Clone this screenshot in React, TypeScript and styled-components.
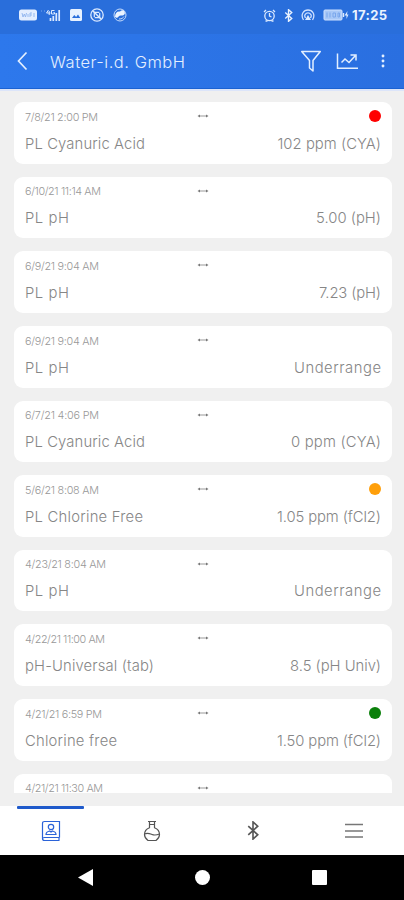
import React, { useLayoutEffect, useRef, useState } from "react";
import styled, { createGlobalStyle } from "styled-components";

const Global = createGlobalStyle`
  * { box-sizing: border-box; }
  body { margin: 0; background: #f0f0f0; }
`;

const Screen = styled.div`
  width: 404px;
  height: 900px;
  display: flex;
  flex-direction: column;
  overflow: hidden;
  background: #f0f0f0;
  font-family: Inter, "Open Sans", sans-serif;
`;

const StatusBar = styled.div`
  height: 34px;
  flex: none;
  display: flex;
  align-items: center;
  justify-content: space-between;
  padding: 0 17px 4px 18px;
  background: #296edb;
  color: #eaf3ff;
`;

const StatusGroup = styled.div<{ $gap: number }>`
  display: flex;
  align-items: center;
  gap: ${(p) => p.$gap}px;
  svg { display: block; flex: none; }
`;

const Clock = styled.span`
  font-size: 13px;
  line-height: 16px;
  font-weight: 700;
`;

const Header = styled.header`
  height: 55px;
  flex: none;
  display: flex;
  align-items: center;
  padding: 0 14px 0 16px;
  background: linear-gradient(90deg, #2d78ec, #2a6fe0);
  border-bottom: 1px solid #1b62d2;
  color: #e3efff;
  svg { display: block; flex: none; }
`;

const Title = styled.h1`
  margin: 0 0 0 20px;
  padding-top: 1px;
  flex: 1;
  font-size: 16.5px;
  line-height: 22px;
  font-weight: 300;
`;

const HeaderActions = styled.div`
  display: flex;
  align-items: center;
  gap: 14px;
`;

const List = styled.main`
  height: 704px;
  flex: none;
  overflow: hidden;
  border-top: 2px solid #dce5fa;
  padding: 11.3px 12px 0 14px;
  display: flex;
  flex-direction: column;
  gap: 13px;
`;

const Card = styled.article`
  height: 61.6px;
  flex: none;
  display: grid;
  grid-template-rows: 28px 27px;
  border-radius: 9px;
  padding: 0 11px 0 11px;
  background: #fff;
`;

const CardTop = styled.div`
  display: grid;
  grid-template-columns: 172px 12px 1fr;
  align-items: center;
  svg { display: block; }
`;

const CardBottom = styled.div`
  display: flex;
  align-items: center;
  justify-content: space-between;
`;

const Stamp = styled.time`
  font-size: 10.8px;
  line-height: 14px;
  font-weight: 300;
  color: #979797;
  padding-top: 3px;
`;

const Label = styled.span`
  font-size: 14.8px;
  line-height: 20px;
  font-weight: 300;
  color: #868686;
`;

const Dot = styled.i<{ $color: string }>`
  justify-self: end;
  width: 12px;
  height: 12px;
  border-radius: 50%;
  background: ${(p) => p.$color};
`;

const Fitted = styled.span`
  display: inline-block;
  white-space: pre;
  vertical-align: top;
`;

const TabBar = styled.nav`
  height: 49px;
  margin-top: 13px;
  flex: none;
  display: grid;
  grid-template-columns: repeat(4, 1fr);
  background: #fff;
`;

const Tab = styled.div<{ $active?: boolean }>`
  display: flex;
  align-items: center;
  justify-content: center;
  position: relative;
  color: ${(p) => (p.$active ? "#2b63d8" : "#555")};
  &::before {
    content: "";
    display: ${(p) => (p.$active ? "block" : "none")};
    position: absolute;
    top: 0;
    left: 17px;
    width: 67px;
    height: 3px;
    border-radius: 1px;
    background: #1f5acb;
  }
`;

const SystemBar = styled.div`
  height: 45px;
  flex: none;
  display: flex;
  align-items: center;
  justify-content: center;
  gap: 102px;
  background: #000;
`;

/* Spreads a string over a given width by adjusting its letter spacing. */
function Fit({ text, width }: { text: string; width: number }) {
  const ref = useRef<HTMLSpanElement>(null);
  const [spacing, setSpacing] = useState(0);
  useLayoutEffect(() => {
    const natural = ref.current!.getBoundingClientRect().width;
    setSpacing((width - natural) / (text.length - 1));
  }, [text, width]);
  return (
    <Fitted ref={ref} style={{ letterSpacing: spacing, marginRight: -spacing }}>
      {text}
    </Fitted>
  );
}

type Reading = {
  date: [string, number];
  name?: [string, number];
  value?: [string, number];
  status?: string;
};

const readings: Reading[] = [
  { date: ["7/8/21 2:00 PM", 73], name: ["PL Cyanuric Acid", 120], value: ["102 ppm (CYA)", 103.5], status: "#ff0000" },
  { date: ["6/10/21 11:14 AM", 76], name: ["PL pH", 44], value: ["5.00 (pH)", 65] },
  { date: ["6/9/21 9:04 AM", 74], name: ["PL pH", 44], value: ["7.23 (pH)", 62] },
  { date: ["6/9/21 9:04 AM", 74], name: ["PL pH", 44], value: ["Underrange", 87] },
  { date: ["6/7/21 4:06 PM", 74], name: ["PL Cyanuric Acid", 120], value: ["0 ppm (CYA)", 90] },
  { date: ["5/6/21 8:08 AM", 74], name: ["PL Chlorine Free", 118], value: ["1.05 ppm (fCl2)", 104], status: "#ff9f0a" },
  { date: ["4/23/21 8:04 AM", 81], name: ["PL pH", 44], value: ["Underrange", 87] },
  { date: ["4/22/21 11:00 AM", 80], name: ["pH-Universal (tab)", 129], value: ["8.5 (pH Univ)", 91] },
  { date: ["4/21/21 6:59 PM", 77], name: ["Chlorine free", 92], value: ["1.50 ppm (fCl2)", 104], status: "#0b800b" },
  { date: ["4/21/21 11:30 AM", 78] },
];

const DoubleArrow = () => (
  <svg width="12" height="6" viewBox="0 0 12 6">
    <path d="M2 3h8" stroke="#999" strokeWidth="1" />
    <path d="M0.500 3l2.500-1.500v3zM11.500 3L9 1.500v3z" fill="#777" />
  </svg>
);

const BluetoothMark = ({ w, h, stroke }: { w: number; h: number; stroke: number }) => (
  <svg width={w} height={h} viewBox="0 0 12 20" fill="none" stroke="currentColor" strokeWidth={stroke}>
    <path d="M1 5.500l10 9L6 19V1l5 4.500-10 9" />
  </svg>
);

function StatusIcons() {
  return (
    <StatusGroup $gap={8.5}>
      <StatusGroup $gap={2}>
        <svg width="20" height="12" viewBox="0 0 20 12">
          <rect x="1" y="0.500" width="18" height="11" rx="2.500" fill="#e3eeff" />
          <path d="M4 4l1 4 1.300-3 1.200 3 1-4M10 5v3M12 8V4h2M12 6h2M16 4v4" fill="none" stroke="#8db3ee" strokeWidth="0.900" />
        </svg>
        <svg width="21" height="13" viewBox="0 0 21 13" fill="none" stroke="#dceaff">
          <path d="M1 2h1M4 2h1" opacity="0.450" />
          <path d="M8.500 1L6.500 4h4M9.200 2v4M14.500 1.500h-3v3.500h3V3.500h-1" />
          <path d="M10.500 12V9M13.300 12V7M16.300 12V4M19.200 12V1" strokeWidth="1.700" />
        </svg>
      </StatusGroup>
      <svg width="12" height="12" viewBox="0 0 12 12">
        <rect width="12" height="12" rx="1.500" fill="#e8f2ff" />
        <path d="M2 9l2.300-3 1.800 2L8 5.500 10.300 9z" fill="#296edb" />
      </svg>
      <svg width="14" height="14" viewBox="0 0 14 14" fill="none" stroke="#dceaff">
        <circle cx="7" cy="7" r="6.200" strokeWidth="1.300" />
        <path d="M4.300 9V4.300h5M9.700 5v4.700h-5" strokeWidth="1.200" />
        <path d="M3 3l8 8" strokeWidth="1.500" />
      </svg>
      <svg width="14" height="14" viewBox="0 0 14 14">
        <circle cx="7" cy="7" r="6" fill="none" stroke="#c4dafb" />
        <path d="M2 9C2 5 4 3 7 3.500c2-2 4-1 4.500 0 1 2 0 4-3 4C6 7 5.500 9 4 10z" fill="#eaf3ff" />
        <path d="M6 11c3 0 4-1 5-2.500" fill="none" stroke="#c4dafb" />
      </svg>
    </StatusGroup>
  );
}

function StatusInfo() {
  return (
    <StatusGroup $gap={8}>
      <svg width="13" height="13" viewBox="0 0 13 13" fill="none" stroke="#dceaff" strokeWidth="1.300">
        <circle cx="6.500" cy="7" r="4.700" />
        <path d="M1 3l2-2M12 3l-2-2M6.500 4v3l2 1M2.500 12h2M8.500 12h2" />
      </svg>
      <BluetoothMark w={9} h={13} stroke={2.1} />
      <svg width="14" height="12" viewBox="0 0 14 12" fill="none" stroke="#cfe1ff" strokeWidth="1.300">
        <path d="M2.500 11C-1 5 3 1 7 1s8 4 4.500 10M4.500 9C2.500 6 5 3.800 7 3.800S11.500 6 9.500 9" />
        <path d="M7 6l-3 5h6z" fill="#dceaff" stroke="none" />
      </svg>
      <StatusGroup $gap={3}>
        <svg width="26" height="12" viewBox="0 0 26 12">
          <rect x="1" y="1" width="18" height="10" rx="1" fill="#a8c8f7" stroke="#cfe1ff" />
          <path d="M4 3.500v5M7 3.500v5M10 4h2.500v4H10zM15 4h1.500v4H15z" fill="none" stroke="#79a6ec" />
          <path d="M20.500 4v4" fill="none" stroke="#dceaff" strokeWidth="1.400" />
          <path d="M24.500 2l-3 4.500h2V10l2-4.500h-1.500z" fill="#dceaff" />
        </svg>
        <Clock><Fit text="17:25" width={35} /></Clock>
      </StatusGroup>
    </StatusGroup>
  );
}

export default function App() {
  return (
    <>
      <Global />
      <Screen>
        <StatusBar>
          <StatusIcons />
          <StatusInfo />
        </StatusBar>
        <Header>
          <svg width="14" height="20" viewBox="0 0 14 20" fill="none" stroke="currentColor" strokeWidth="1.700">
            <path d="M10.500 1.500L2.500 10l8 8.500" />
          </svg>
          <Title><Fit text="Water-i.d. GmbH" width={135} /></Title>
          <HeaderActions>
            <svg width="22" height="22" viewBox="0 0 22 22" fill="none" stroke="currentColor" strokeWidth="1.500" strokeLinejoin="round">
              <path d="M1.700 1.500h18.600L13 10.500V21l-3.500-3v-7.500z" />
            </svg>
            <svg width="22" height="18" viewBox="0 0 22 18" fill="none" stroke="currentColor" strokeWidth="1.500">
              <path d="M1.500 1.500v14.800H22M5.500 10.500l3.500-3.500 4 3.500L19 4M14.500 3H20v5.500" />
            </svg>
            <svg width="18" height="16" viewBox="0 0 18 16" fill="currentColor">
              <circle cx="11" cy="3" r="1.450" />
              <circle cx="11" cy="8" r="1.450" />
              <circle cx="11" cy="13" r="1.450" />
            </svg>
          </HeaderActions>
        </Header>
        <List>
          {readings.map((r, i) => (
            <Card key={i}>
              <CardTop>
                <Stamp><Fit text={r.date[0]} width={r.date[1]} /></Stamp>
                <DoubleArrow />
                {r.status && <Dot $color={r.status} />}
              </CardTop>
              {r.name && r.value && (
                <CardBottom>
                  <Label><Fit text={r.name[0]} width={r.name[1]} /></Label>
                  <Label><Fit text={r.value[0]} width={r.value[1]} /></Label>
                </CardBottom>
              )}
            </Card>
          ))}
        </List>
        <TabBar>
          <Tab $active>
            <svg width="20" height="22" viewBox="0 0 20 22" fill="none" stroke="currentColor" strokeWidth="1.200">
              <path d="M18.500 17.500V1.500H3.500Q1.500 1.500 1.500 3.500v15q0 2 2 2h15M18.500 17.500h-15q-2 0-2 1.500M18 17.500v3" />
              <circle cx="10" cy="7" r="2.700" />
              <path d="M5 14.500c0-2 1.500-3 3.500-3.500l1.500 1 1.500-1c2 .5 3.500 1.500 3.500 3.500z" />
            </svg>
          </Tab>
          <Tab>
            <svg width="18" height="22" viewBox="0 0 18 22" fill="none" stroke="currentColor" strokeWidth="1.200">
              <path d="M5 1.500h8M6.500 4.500h5M6.500 1.500v6.200C3 9 1.500 11.500 1.500 14.500c0 3 1.500 4.500 3.500 6h8c2-1.500 3.500-3 3.500-6 0-3-1.500-5.500-5-6.800V1.500" />
              <path d="M1.500 14c3-1.500 5-.5 7.500.5s5 .5 7.500-.5" />
            </svg>
          </Tab>
          <Tab><BluetoothMark w={12} h={19} stroke={1.7} /></Tab>
          <Tab>
            <svg width="18" height="16" viewBox="0 0 18 16" stroke="#777" strokeWidth="1.400">
              <path d="M0 1.500h18M0 8h18M0 14h18" />
            </svg>
          </Tab>
        </TabBar>
        <SystemBar>
          <svg width="15" height="17" viewBox="0 0 15 17"><path d="M0 8.500L15 0v17z" fill="#fff" /></svg>
          <svg width="15" height="15" viewBox="0 0 15 15"><circle cx="7.500" cy="7.500" r="7.500" fill="#fff" /></svg>
          <svg width="15" height="15" viewBox="0 0 15 15"><rect width="15" height="15" rx="1" fill="#fff" /></svg>
        </SystemBar>
      </Screen>
    </>
  );
}
